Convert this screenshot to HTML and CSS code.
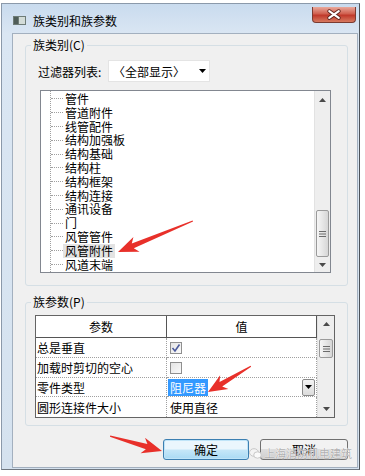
FILE: index.html
```html
<!DOCTYPE html>
<html lang="zh-CN">
<head>
    <meta charset="UTF-8">
    <meta name="viewport" content="width=device-width, initial-scale=1.0">
    <title>族类别和族参数</title>
    <link rel="stylesheet" href="styles.css">
</head>
<body>
    <div class="window">
        <div class="titlebar">
            <svg class="app-icon" width="13" height="9" viewBox="0 0 13 9">
                <rect x="0" y="0" width="13" height="9" fill="#6e7c77"/>
                <rect x="6" y="1" width="6" height="7" fill="#d3dcd8"/>
                <rect x="1" y="1" width="4" height="7" fill="#4f5d58"/>
            </svg>
            <span class="title">族类别和族参数</span>
            <div class="close-btn">
                <svg width="44" height="16" viewBox="0 0 44 16">
                    <path d="M17 4 L27 11 M27 4 L17 11" stroke="#5b211b" stroke-width="4" stroke-linecap="round"/>
                    <path d="M17 4 L27 11 M27 4 L17 11" stroke="#ffffff" stroke-width="2.2" stroke-linecap="round"/>
                </svg>
            </div>
        </div>
        <div class="client">
            <fieldset class="group group-cat">
                <legend>族类别(C)</legend>
                <div class="filter-row">
                    <span class="filter-label">过滤器列表:</span>
                    <div class="combo">
                        <span>〈全部显示〉</span>
                        <svg width="7" height="4" viewBox="0 0 7 4"><polygon points="0,0 7,0 3.5,4" fill="#000"/></svg>
                    </div>
                </div>
                <div class="listbox">
                    <ul class="tree">
                        <li><span>管件</span></li>
                        <li><span>管道附件</span></li>
                        <li><span>线管配件</span></li>
                        <li><span>结构加强板</span></li>
                        <li><span>结构基础</span></li>
                        <li><span>结构柱</span></li>
                        <li><span>结构框架</span></li>
                        <li><span>结构连接</span></li>
                        <li><span>通讯设备</span></li>
                        <li><span>门</span></li>
                        <li><span>风管管件</span></li>
                        <li><span class="sel">风管附件</span></li>
                        <li><span>风道末端</span></li>
                    </ul>
                    <div class="vscroll list-scroll">
                        <div class="sb-btn sb-up">
                            <svg width="7" height="4" viewBox="0 0 7 4"><polygon points="0,4 7,4 3.5,0" fill="#4a4a4a"/></svg>
                        </div>
                        <div class="sb-track">
                            <div class="sb-thumb">
                                <svg width="7" height="6" viewBox="0 0 7 6"><path d="M0 0.5 H7 M0 3 H7 M0 5.5 H7" stroke="#6b6b6b"/></svg>
                            </div>
                        </div>
                        <div class="sb-btn sb-down">
                            <svg width="7" height="4" viewBox="0 0 7 4"><polygon points="0,0 7,0 3.5,4" fill="#4a4a4a"/></svg>
                        </div>
                    </div>
                </div>
            </fieldset>

            <fieldset class="group group-param">
                <legend>族参数(P)</legend>
                <div class="ptable">
                    <div class="pgrid">
                        <div class="th">参数</div>
                        <div class="th">值</div>

                        <div class="td c1">总是垂直</div>
                        <div class="td c2">
                            <span class="check">
                                <svg width="10" height="10" viewBox="0 0 10 10"><path d="M1.5 5 L4 8 L8.5 1.5" stroke="#4b5a9c" stroke-width="1.6" fill="none"/></svg>
                            </span>
                        </div>

                        <div class="td c1">加载时剪切的空心</div>
                        <div class="td c2"><span class="check"></span></div>

                        <div class="td c1">零件类型</div>
                        <div class="td c2 edit-cell">
                            <span class="picked">阻尼器</span>
                            <span class="drop-btn">
                                <svg width="7" height="4" viewBox="0 0 7 4"><polygon points="0,0 7,0 3.5,4" fill="#000"/></svg>
                            </span>
                        </div>

                        <div class="td c1 last">圆形连接件大小</div>
                        <div class="td c2 last">使用直径</div>
                    </div>
                    <div class="vscroll table-scroll">
                        <div class="sb-btn sb-up">
                            <svg width="7" height="4" viewBox="0 0 7 4"><polygon points="0,4 7,4 3.5,0" fill="#4a4a4a"/></svg>
                        </div>
                        <div class="sb-track">
                            <div class="sb-thumb">
                                <svg width="7" height="6" viewBox="0 0 7 6"><path d="M0 0.5 H7 M0 3 H7 M0 5.5 H7" stroke="#6b6b6b"/></svg>
                            </div>
                        </div>
                        <div class="sb-btn sb-down">
                            <svg width="7" height="4" viewBox="0 0 7 4"><polygon points="0,0 7,0 3.5,4" fill="#4a4a4a"/></svg>
                        </div>
                    </div>
                </div>
            </fieldset>

            <div class="buttons">
                <button class="btn btn-ok">确定</button>
                <button class="btn">取消</button>
            </div>
        </div>
    </div>

    <!-- watermark over the cancel button -->
    <div class="watermark">
        <svg width="13" height="11" viewBox="0 0 13 11">
            <ellipse cx="5" cy="4.5" rx="4.5" ry="3.8" fill="#f4f4f4" stroke="#c8c8c8"/>
            <ellipse cx="8.5" cy="7" rx="3.8" ry="3.2" fill="#fafafa" stroke="#c8c8c8"/>
        </svg>
        <span>上海消防机电建筑</span>
    </div>

    <!-- red annotation arrows -->
    <svg class="marks" width="365" height="476" viewBox="0 0 365 476">
        <polygon transform="translate(118,252) rotate(-22.5)" points="0,0 20,-8 16,-2.6 81,-0.6 81,0.6 16,2.6 20,8" fill="#e8302a"/>
        <polygon transform="translate(208,392) rotate(-31)" points="0,0 19,-8 15,-2.6 50,-0.6 50,0.6 15,2.6 19,8" fill="#e8302a"/>
        <polygon transform="translate(162,451) rotate(-164)" points="0,0 20,-8 16,-2.8 54,-0.6 54,0.6 16,2.8 20,8" fill="#e8302a"/>
    </svg>
</body>
</html>
```

FILE: styles.css
```css
body {
    margin: 0;
    width: 365px;
    height: 476px;
    overflow: hidden;
    position: relative;
    background: #fff;
    font-family: "Noto Sans CJK SC", "Noto Sans", sans-serif;
    font-size: 12px;
    color: #000;
}
.window {
    margin: 3px 0 0 1px;
    width: 359px;
    box-sizing: border-box;
    border: 1px solid #8b99aa;
    border-right-color: #4d5258;
    border-bottom-color: #6f7780;
    padding: 0 1px 1px 10px;
    background: linear-gradient(#c9dbee, #dae6f3 30px, #d5e2ef);
}
.titlebar {
    display: flex;
    align-items: center;
    height: 29px;
    padding-top: 5px;
    box-sizing: border-box;
}
.app-icon {
    align-self: flex-start;
    margin: 7px 0 0 1px;
}
.title {
    margin-left: 7px;
    line-height: 16px;
}
.close-btn {
    align-self: flex-start;
    margin: -2px 2px 0 auto;
    width: 44px;
    height: 16px;
    box-sizing: border-box;
    border: 1px solid #7b3b31;
    border-top: none;
    border-radius: 0 0 4px 4px;
    background: linear-gradient(#e9a99c, #d0604f 45%, #c0392b 55%, #d77a60);
    display: flex;
}
.client {
    background: #f0f0f0;
    border: 1px solid #a3b0bf;
}
.group {
    margin: 8px 0 0 12px;
    width: 323px;
    min-width: 0;
    box-sizing: border-box;
    padding: 0;
    border: 1px solid #d5dfe5;
    border-radius: 3px;
}
.group legend {
    margin-left: 5px;
    padding: 0 2px;
    line-height: 16px;
}
.group-cat {
    margin-top: 3px;
    padding-bottom: 12px;
}
.group-param {
    padding-bottom: 7px;
}
.filter-row {
    display: flex;
    align-items: center;
    height: 22px;
    margin: 7px 0 0 12px;
}
.filter-label {
    width: 70px;
}
.combo {
    width: 102px;
    height: 22px;
    box-sizing: border-box;
    background: #fff;
    border: 1px solid #e4e4e4;
    display: flex;
    align-items: center;
    justify-content: space-between;
    padding: 0 3px 0 4px;
}
.listbox {
    margin: 8px 0 0 14px;
    width: 291px;
    height: 183px;
    box-sizing: border-box;
    border: 1px solid #828790;
    background: #fff;
    display: flex;
}
.tree {
    flex: 1;
    margin: 0 0 0 9px;
    padding: 1px 0 0;
    list-style: none;
    border-left: 1px dotted #a0a0a0;
    overflow: hidden;
}
.tree li {
    display: flex;
    align-items: center;
    height: 13.8px;
}
.tree li::before {
    content: "";
    width: 12px;
    border-top: 1px dotted #a0a0a0;
}
.tree span {
    display: inline-block;
    height: 13.8px;
    line-height: 13.8px;
    padding: 0 2px;
}
.tree .sel {
    background: #e3e3e3;
}
.vscroll {
    display: flex;
    flex-direction: column;
    background: #eeeeee;
    border-left: 1px solid #e2e2e2;
}
.list-scroll {
    width: 15px;
}
.table-scroll {
    width: 17px;
}
.sb-btn {
    display: flex;
    align-items: center;
    justify-content: center;
}
.list-scroll .sb-up { height: 17px; }
.list-scroll .sb-down { height: 15px; }
.table-scroll .sb-up { height: 16px; }
.table-scroll .sb-down { height: 17px; }
.sb-track {
    flex: 1;
    display: flex;
    flex-direction: column;
}
.list-scroll .sb-track {
    justify-content: flex-end;
}
.sb-thumb {
    margin: 0 1px;
    box-sizing: border-box;
    border: 1px solid #9a9a9a;
    border-radius: 2px;
    background: linear-gradient(90deg, #f6f6f6, #e6e6e6 50%, #d6d6d6);
    display: flex;
    align-items: center;
    justify-content: center;
}
.list-scroll .sb-thumb {
    height: 47px;
}
.table-scroll .sb-thumb {
    height: 19px;
    margin-top: 7px;
}
.ptable {
    margin: 5px 0 0 9px;
    width: 300px;
    height: 103px;
    box-sizing: border-box;
    border: 1px solid #646464;
    background: #fff;
    display: flex;
}
.pgrid {
    width: 281px;
    display: grid;
    grid-template-columns: 131px 150px;
    grid-template-rows: 22px 20px 20px 19px 20px;
}
.th {
    border-right: 1px solid #555;
    border-bottom: 1px solid #555;
    display: flex;
    align-items: center;
    justify-content: center;
}
.td {
    border-bottom: 1px dotted #a0a0a0;
    display: flex;
    align-items: center;
    white-space: nowrap;
}
.td.last {
    border-bottom: none;
}
.c1 {
    padding-left: 1px;
    border-right: 1px dotted #a0a0a0;
}
.c2 {
    padding-left: 3px;
    border-right: 1px dotted #a0a0a0;
}
.check {
    width: 12px;
    height: 12px;
    box-sizing: border-box;
    border: 1px solid #8f8f8f;
    background: linear-gradient(135deg, #e4e4e4, #fafafa);
    display: flex;
    align-items: center;
    justify-content: center;
}
.edit-cell {
    padding-left: 1px;
    justify-content: space-between;
}
.picked {
    display: inline-block;
    background: #3399ff;
    color: #fff;
    padding: 0 2px;
    height: 17px;
    line-height: 17px;
}
.drop-btn {
    width: 13px;
    height: 17px;
    margin-right: 1px;
    box-sizing: border-box;
    border: 1px solid #8a8a8a;
    border-radius: 2px;
    background: linear-gradient(#f4f4f4, #dcdcdc);
    display: flex;
    align-items: center;
    justify-content: center;
}
.buttons {
    display: flex;
    justify-content: flex-end;
    gap: 11px;
    margin: 13px 9px 7px 0;
}
.btn {
    width: 88px;
    height: 21px;
    padding: 0;
    font: inherit;
    font-size: 12px;
    color: #000;
    border: 1px solid #707070;
    border-radius: 3px;
    background: linear-gradient(#f2f2f2 50%, #dddddd 50%, #cfcfcf);
}
.btn-ok {
    width: 86px;
    border-color: #3c7fb1;
    background: linear-gradient(#eaf6fd 45%, #c4e6f8 55%, #a9daf4);
    box-shadow: inset 0 0 0 1px #bfe4f8;
}
.watermark {
    position: absolute;
    left: 249px;
    top: 445px;
    display: flex;
    align-items: center;
    gap: 2px;
    font-size: 11px;
    color: rgba(150, 150, 150, 0.75);
    text-shadow: 0 0 1px #fff, 0 0 1px #fff;
}
.marks {
    position: absolute;
    top: 0;
    left: 0;
    pointer-events: none;
}
```
